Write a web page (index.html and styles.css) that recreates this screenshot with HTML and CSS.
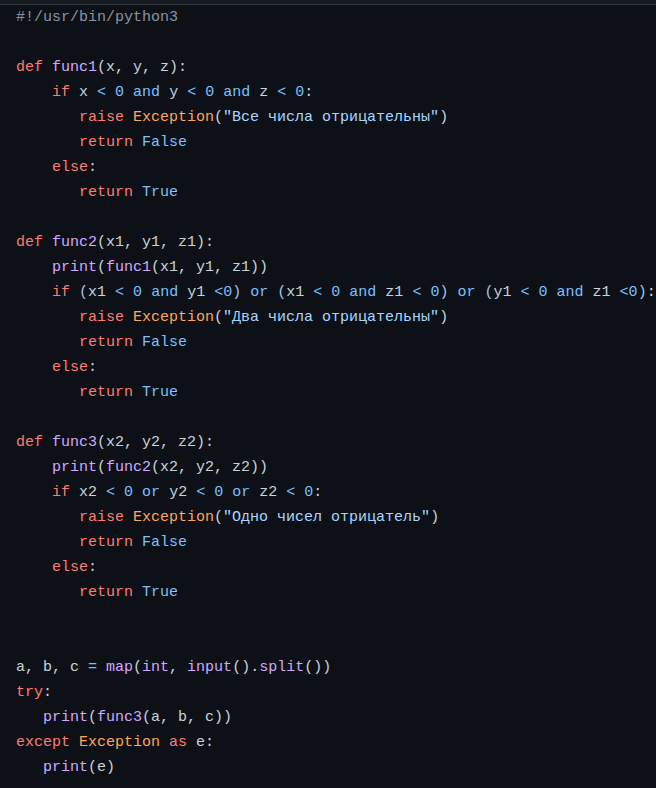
FILE: index.html
```html
<!DOCTYPE html>
<html lang="ru">
<head>
<meta charset="utf-8">
<link rel="stylesheet" href="styles.css">
</head>
<body>
<div class="topbar"></div>
<pre class="code"><span class="c">#!/usr/bin/python3</span>

<span class="k">def</span> <span class="f">func1</span>(x, y, z):
    <span class="k">if</span> x <span class="n">&lt;</span> <span class="n">0</span> <span class="n">and</span> y <span class="n">&lt;</span> <span class="n">0</span> <span class="n">and</span> z <span class="n">&lt;</span> <span class="n">0</span>:
       <span class="k">raise</span> <span class="e">Exception</span>(<span class="s">"Все числа отрицательны"</span>)
       <span class="k">return</span> <span class="n">False</span>
    <span class="k">else</span>:
       <span class="k">return</span> <span class="n">True</span>

<span class="k">def</span> <span class="f">func2</span>(x1, y1, z1):
    <span class="f">print</span>(<span class="f">func1</span>(x1, y1, z1))
    <span class="k">if</span> <span class="p">(</span>x1 <span class="n">&lt;</span> <span class="n">0</span> <span class="n">and</span> y1 <span class="n">&lt;0</span><span class="p">)</span> <span class="n">or</span> <span class="p">(</span>x1 <span class="n">&lt;</span> <span class="n">0</span> <span class="n">and</span> z1 <span class="n">&lt;</span> <span class="n">0</span><span class="p">)</span> <span class="n">or</span> <span class="p">(</span>y1 <span class="n">&lt;</span> <span class="n">0</span> <span class="n">and</span> z1 <span class="n">&lt;0</span><span class="p">)</span>:
       <span class="k">raise</span> <span class="e">Exception</span>(<span class="s">"Два числа отрицательны"</span>)
       <span class="k">return</span> <span class="n">False</span>
    <span class="k">else</span>:
       <span class="k">return</span> <span class="n">True</span>

<span class="k">def</span> <span class="f">func3</span>(x2, y2, z2):
    <span class="f">print</span>(<span class="f">func2</span>(x2, y2, z2))
    <span class="k">if</span> x2 <span class="n">&lt;</span> <span class="n">0</span> <span class="n">or</span> y2 <span class="n">&lt;</span> <span class="n">0</span> <span class="n">or</span> z2 <span class="n">&lt;</span> <span class="n">0</span>:
       <span class="k">raise</span> <span class="e">Exception</span>(<span class="s">"Одно чисел отрицатель"</span>)
       <span class="k">return</span> <span class="n">False</span>
    <span class="k">else</span>:
       <span class="k">return</span> <span class="n">True</span>


a, b, c <span class="n">=</span> <span class="f">map</span>(<span class="f">int</span>, <span class="f">input</span>().<span class="f">split</span>())
<span class="k">try</span>:
   <span class="f">print</span>(<span class="f">func3</span>(a, b, c))
<span class="k">except</span> <span class="e">Exception</span> <span class="k">as</span> e:
   <span class="f">print</span>(e)
</pre>
</body>
</html>
```
FILE: styles.css
```css
html, body {
  margin: 0;
  padding: 0;
  background: #0d1117;
  overflow: hidden;
}

.topbar {
  height: 4px;
  background: #161b22;
  border-bottom: 1px solid #30363d;
}

.code {
  margin: 0;
  padding: 0 0 0 16px;
  font-family: "Liberation Mono", "DejaVu Sans Mono", monospace;
  font-size: 15px;
  line-height: 25px;
  color: #c9d1d9;
  white-space: pre;
}

.c { color: #8b949e; }
.k { color: #ff7b72; }
.f { color: #d2a8ff; }
.n { color: #79c0ff; }
.s { color: #a5d6ff; }
.e { color: #ffa657; }
.p { color: #a5c4e0; }
```
